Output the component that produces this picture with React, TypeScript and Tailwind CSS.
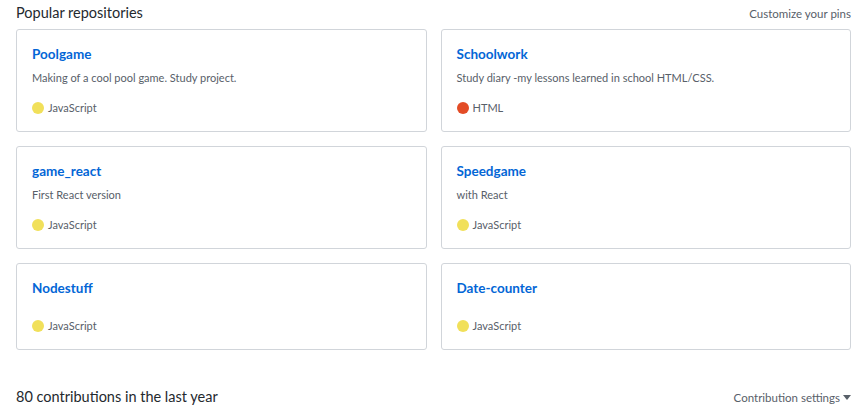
const repos = [
  { name: "Poolgame", desc: "Making of a cool pool game. Study project.", lang: "JavaScript", color: "bg-[#f1e05a]" },
  { name: "Schoolwork", desc: "Study diary -my lessons learned in school HTML/CSS.", lang: "HTML", color: "bg-[#e34c26]" },
  { name: "game_react", desc: "First React version", lang: "JavaScript", color: "bg-[#f1e05a]" },
  { name: "Speedgame", desc: "with React", lang: "JavaScript", color: "bg-[#f1e05a]" },
  { name: "Nodestuff", desc: "", lang: "JavaScript", color: "bg-[#f1e05a]" },
  { name: "Date-counter", desc: "", lang: "JavaScript", color: "bg-[#f1e05a]" },
]

function RepoCard({ name, desc, lang, color }: (typeof repos)[number]) {
  return (
    <div className="border border-[#d1d5da] rounded-[3px] pl-[15px] pr-4 pt-[14px] pb-[14px] flex flex-col">
      <a href="#" className="text-[13.5px] leading-[20px] font-bold text-[#0366d6]">
        {name}
      </a>
      {desc ? (
        <p className="text-[11px] leading-[18px] text-[#586069] mt-[5px] mb-[12px]">{desc}</p>
      ) : (
        <div className="h-[19px]" />
      )}
      <div className="flex items-center gap-[4px] text-[11px] leading-[18px] text-[#586069]">
        <span className={`w-[12px] h-[12px] rounded-full ${color}`} />
        <span>{lang}</span>
      </div>
    </div>
  )
}

export default function App() {
  return (
    <div className="bg-white pl-4 pr-[11px] pt-[2px] text-[#24292e] font-['Lato',sans-serif]">
      <div className="flex items-baseline justify-between">
        <h2 className="text-[14.5px] leading-[22px]">Popular repositories</h2>
        <a href="#" className="text-[11.5px] text-[#586069]">Customize your pins</a>
      </div>
      <div className="grid grid-cols-2 gap-x-[14px] gap-y-[14px] mt-[5px]">
        {repos.map((r) => (
          <RepoCard key={r.name} {...r} />
        ))}
      </div>
      <div className="flex items-baseline justify-between mt-[36px]">
        <h2 className="text-[14.5px] leading-[22px]">80 contributions in the last year</h2>
        <span className="text-[11.5px] text-[#586069] flex items-center gap-[3px]">
          Contribution settings
          <svg width="8" height="5" viewBox="0 0 8 5"><path d="M0 0h8L4 5z" fill="#586069" /></svg>
        </span>
      </div>
    </div>
  )
}
